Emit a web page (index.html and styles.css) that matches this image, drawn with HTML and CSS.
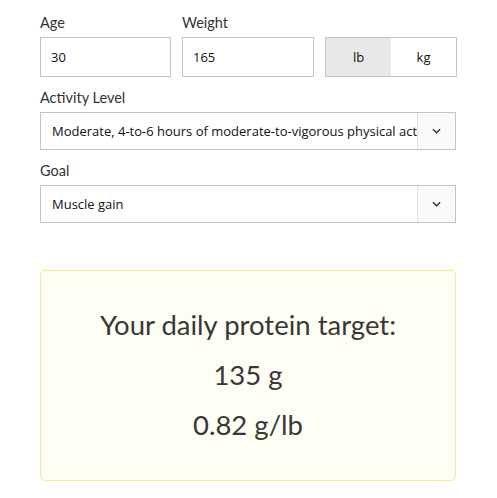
FILE: index.html
```html
<!DOCTYPE html>
<html lang="en">
<head>
  <meta charset="UTF-8" />
  <meta name="viewport" content="width=device-width, initial-scale=1.0" />
  <title>Protein Calculator</title>
  <link rel="stylesheet" href="styles.css">
</head>
<body>
  <div class="calc">
    <div class="row">
      <div class="field">
        <label>Age</label>
        <div class="input">30</div>
      </div>
      <div class="field">
        <label>Weight</label>
        <div class="input">165</div>
      </div>
      <div class="field">
        <label>&nbsp;</label>
        <div class="units">
          <span class="unit active">lb</span>
          <span class="unit">kg</span>
        </div>
      </div>
    </div>

    <div class="field group">
      <label>Activity Level</label>
      <div class="select">
        <span class="select-text">Moderate, 4-to-6 hours of moderate-to-vigorous physical activity per week</span>
        <span class="chevron">
          <svg viewBox="0 0 10 6" width="9" height="6"><path d="M1 1l4 4 4-4" fill="none" stroke="#333" stroke-width="1.5"/></svg>
        </span>
      </div>
    </div>

    <div class="field group">
      <label>Goal</label>
      <div class="select">
        <span class="select-text">Muscle gain</span>
        <span class="chevron">
          <svg viewBox="0 0 10 6" width="9" height="6"><path d="M1 1l4 4 4-4" fill="none" stroke="#333" stroke-width="1.5"/></svg>
        </span>
      </div>
    </div>

    <div class="result">
      <div class="result-line">Your daily protein target:</div>
      <div class="result-line">135 g</div>
      <div class="result-line">0.82 g/lb</div>
    </div>
  </div>
</body>
</html>
```

FILE: styles.css
```css
body {
  margin: 0;
  font-family: 'Lato', 'Open Sans', sans-serif;
  color: #333;
  background: #fff;
}
.calc {
  padding: 13px 41px 0 40px;
}
.row {
  display: grid;
  grid-template-columns: 131px 132px 132px;
  column-gap: 11px;
}
.field label {
  display: block;
  font-size: 14.5px;
  line-height: 20px;
  margin-bottom: 4px;
  color: #333;
}
.group {
  margin-top: 11px;
}
.input {
  box-sizing: border-box;
  height: 40px;
  border: 1px solid #c4c4c4;
  padding: 0 10px;
  display: flex;
  align-items: center;
  font-family: 'Open Sans', sans-serif;
  font-size: 13px;
  color: #111;
}
.units {
  box-sizing: border-box;
  height: 40px;
  border: 1px solid #c4c4c4;
  display: flex;
}
.unit {
  flex: 1;
  display: flex;
  align-items: center;
  justify-content: center;
  font-family: 'Open Sans', sans-serif;
  font-size: 13px;
  color: #111;
}
.unit.active {
  background: #e8e8e8;
}
.select {
  box-sizing: border-box;
  height: 38px;
  border: 1px solid #c4c4c4;
  display: flex;
  align-items: stretch;
}
.select-text {
  flex: 1;
  min-width: 0;
  padding: 0 0 0 11px;
  display: flex;
  align-items: center;
  white-space: nowrap;
  overflow: hidden;
  font-family: 'Open Sans', sans-serif;
  font-size: 13px;
  color: #111;
}
.chevron {
  width: 37px;
  flex-shrink: 0;
  border-left: 1px solid #e2e2e2;
  background: #fafafa;
  display: flex;
  align-items: center;
  justify-content: center;
}
.result {
  margin-top: 47px;
  border: 1px solid #fde58a;
  border-radius: 5px;
  background: #fffef4;
  padding: 29px 0 30px;
  text-align: center;
}
.result-line {
  font-size: 27.5px;
  line-height: 50px;
  color: #383838;
}
```
